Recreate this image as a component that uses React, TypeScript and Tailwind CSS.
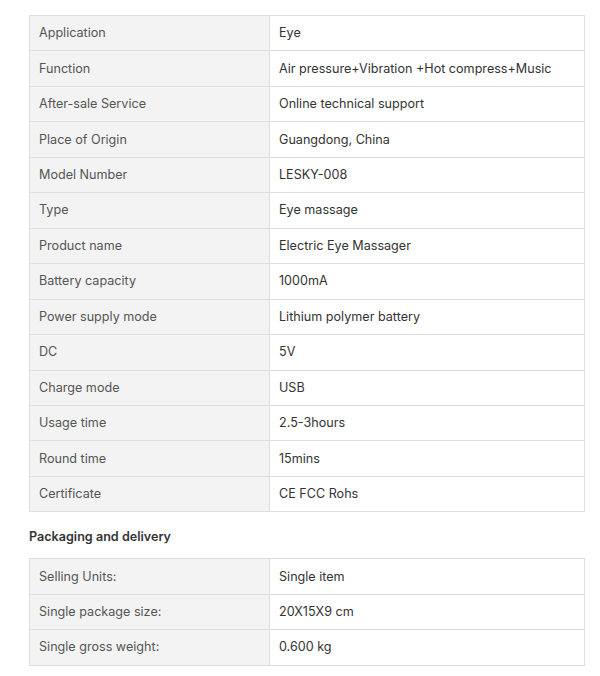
import React from 'react';

const specs: [string, string][] = [
  ['Application', 'Eye'],
  ['Function', 'Air pressure+Vibration +Hot compress+Music'],
  ['After-sale Service', 'Online technical support'],
  ['Place of Origin', 'Guangdong, China'],
  ['Model Number', 'LESKY-008'],
  ['Type', 'Eye massage'],
  ['Product name', 'Electric Eye Massager'],
  ['Battery capacity', '1000mA'],
  ['Power supply mode', 'Lithium polymer battery'],
  ['DC', '5V'],
  ['Charge mode', 'USB'],
  ['Usage time', '2.5-3hours'],
  ['Round time', '15mins'],
  ['Certificate', 'CE FCC Rohs'],
];

const packaging: [string, string][] = [
  ['Selling Units:', 'Single item'],
  ['Single package size:', '20X15X9 cm'],
  ['Single gross weight:', '0.600 kg'],
];

function SpecTable({ rows }: { rows: [string, string][] }) {
  return (
    <table className="w-[556px] border-collapse border border-[#dedede] text-[12.6px] leading-[19px]">
      <tbody>
        {rows.map(([label, value]) => (
          <tr key={label} className="h-[35.46px]">
            <td className="w-[240px] border border-[#dedede] bg-[#f3f3f3] px-[9px] pt-0 pb-[1px] text-[#555]">{label}</td>
            <td className="border border-[#dedede] bg-white px-[9px] pt-0 pb-[1px] text-[#333]">{value}</td>
          </tr>
        ))}
      </tbody>
    </table>
  );
}

export default function App() {
  return (
    <div className="min-h-[676px] bg-white pl-[29px] pt-[15px] font-['Inter',sans-serif]">
      <SpecTable rows={specs} />
      <h3 className="mt-[15px] mb-[11px] text-[12.6px] font-semibold leading-[20px] text-[#333]">Packaging and delivery</h3>
      <SpecTable rows={packaging} />
    </div>
  );
}
